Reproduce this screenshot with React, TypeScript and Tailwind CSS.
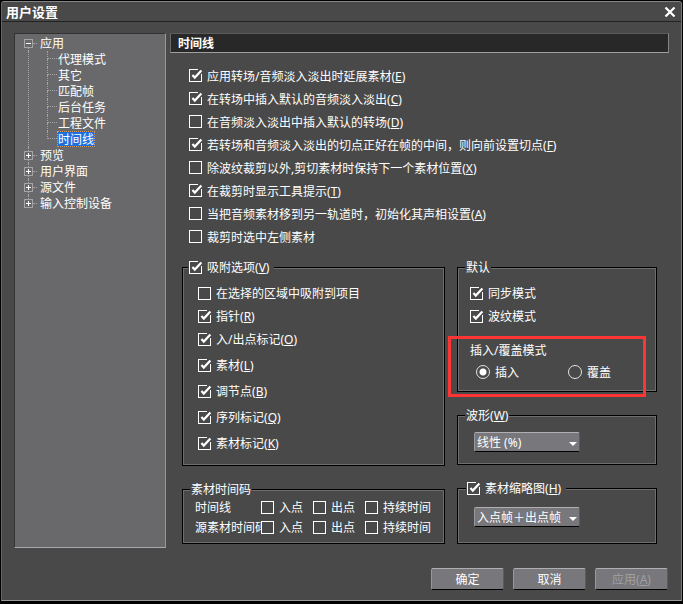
import React, { useState } from 'react';

interface CheckItem {
  label: string;
  hotkey?: string;
  checked?: boolean;
}

const generalOptions: CheckItem[] = [
  { label: '应用转场/音频淡入淡出时延展素材', hotkey: 'E', checked: true },
  { label: '在转场中插入默认的音频淡入淡出', hotkey: 'C', checked: true },
  { label: '在音频淡入淡出中插入默认的转场', hotkey: 'D' },
  { label: '若转场和音频淡入淡出的切点正好在帧的中间，则向前设置切点', hotkey: 'F', checked: true },
  { label: '除波纹裁剪以外,剪切素材时保持下一个素材位置', hotkey: 'X' },
  { label: '在裁剪时显示工具提示', hotkey: 'T', checked: true },
  { label: '当把音频素材移到另一轨道时，初始化其声相设置', hotkey: 'A' },
  { label: '裁剪时选中左侧素材' },
];

const snapTargets: CheckItem[] = [
  { label: '在选择的区域中吸附到项目' },
  { label: '指针', hotkey: 'R', checked: true },
  { label: '入/出点标记', hotkey: 'O', checked: true },
];

const snapMarkers: CheckItem[] = [
  { label: '素材', hotkey: 'L', checked: true },
  { label: '调节点', hotkey: 'B', checked: true },
  { label: '序列标记', hotkey: 'Q', checked: true },
  { label: '素材标记', hotkey: 'K', checked: true },
];

const appPages = ['代理模式', '其它', '匹配帧', '后台任务', '工程文件', '时间线'];
const otherSections = ['预览', '用户界面', '源文件', '输入控制设备'];

const Hotkey = ({ k }: { k: string }) => (
  <>
    (<u className="underline-offset-1">{k}</u>)
  </>
);

const Check: React.FC<CheckItem> = ({ label, hotkey, checked }) => (
  <label className="flex h-4 items-center gap-[5px] whitespace-nowrap">
    <span className="relative flex shrink-0">
      <input
        type="checkbox"
        defaultChecked={checked}
        className="peer size-[13px] appearance-none border border-white"
      />
      <svg
        viewBox="0 0 14 14"
        className="pointer-events-none absolute top-0 left-0 hidden size-[14px] peer-checked:block"
        fill="none"
      >
        <path d="M9 0H14V5L9 8Z" fill="#494949" />
        <path d="M12.5 5V8" stroke="#fff" />
        <path d="M3.4 6L5.8 8.6L12.4 1.6" stroke="#fff" strokeWidth="2.2" />
      </svg>
    </span>
    <span className="pt-[2px]">
      {label}
      {hotkey && <Hotkey k={hotkey} />}
    </span>
  </label>
);

const Group: React.FC<{ title: React.ReactNode; className?: string; children: React.ReactNode }> = ({
  title,
  className,
  children,
}) => (
  <fieldset
    className={`min-w-0 border border-black shadow-[inset_0_0_0_1px_#6e6e6e] ${className ?? ''}`}
  >
    {title}
    {children}
  </fieldset>
);

const Dropdown = ({ label, options }: { label: string; options: string[] }) => (
  <div className="relative ml-4 w-[106px]">
    <select
      aria-label={label}
      className="block h-5 w-full appearance-none rounded-[2px] border border-t-[#b0b0b3] border-r-[#5c5c60] border-b-black border-l-[#98989b] bg-[#77777c] pt-[2px] pl-[2px] leading-4 text-white"
    >
      {options.map((o) => (
        <option key={o}>{o}</option>
      ))}
    </select>
    <svg viewBox="0 0 8 4" className="pointer-events-none absolute top-[10px] right-[3px] h-1 w-2">
      <path d="M0 0H8L4 4Z" fill="#fff" />
    </svg>
  </div>
);

const Mode = ({ label, checked, onChange }: { label: string; checked: boolean; onChange: () => void }) => (
  <label className="flex h-4 items-center gap-[5px] whitespace-nowrap">
    <input
      type="radio"
      name="edit-mode"
      checked={checked}
      onChange={onChange}
      className="size-[14px] appearance-none rounded-full border border-[#e4e4e4] checked:bg-[radial-gradient(circle,#fff_3px,transparent_4px)]"
    />
    <span className="pt-[2px]">{label}</span>
  </label>
);

const Section = ({ label, open, first, last }: { label: string; open?: boolean; first?: boolean; last?: boolean }) => (
  <div className="flex h-4 items-center">
    <span className="flex h-4 w-[9px] flex-col items-center">
      <span className={`h-1 border-l border-dotted ${first ? 'border-transparent' : 'border-[#a5a5a8]'}`} />
      <button
        aria-label={label}
        className="flex size-[9px] shrink-0 items-center justify-center border border-[#a5a5a8]"
      >
        <svg viewBox="0 0 5 5" className="size-[5px]">
          <path d={open ? 'M0 2.5H5' : 'M0 2.5H5M2.5 0V5'} stroke="#fff" />
        </svg>
      </button>
      <span className={`h-[3px] border-l border-dotted ${last ? 'border-transparent' : 'border-[#a5a5a8]'}`} />
    </span>
    <span className="w-1 border-t border-dotted border-[#a5a5a8]" />
    <span className="ml-[3px] pt-[2px]">{label}</span>
  </div>
);

const Tree = () => {
  const [page, setPage] = useState('时间线');

  return (
    <nav className="w-[152px] shrink-0 border border-t-[#333] border-r-[#98989a] border-b-[#a8a8aa] border-l-[#333] bg-[#69696b] pt-px pl-[9px]">
      <Section label="应用" open first />
      <ul className="ml-1 border-l border-dotted border-[#a5a5a8] pl-[18px]">
        {appPages.map((p, i) => (
          <li key={p} className="flex h-4">
            <span className="flex w-[10px] flex-col">
              <span className="h-2 border-b border-l border-dotted border-[#a5a5a8]" />
              {i < appPages.length - 1 && (
                <span className="h-2 border-l border-dotted border-[#a5a5a8]" />
              )}
            </span>
            <button
              onClick={() => setPage(p)}
              className={`h-4 border border-dotted leading-4 ${
                page === p ? 'border-[#d79a5b] bg-[#1d6fe0]' : 'border-transparent'
              }`}
            >
              {p}
            </button>
          </li>
        ))}
      </ul>
      {otherSections.map((s, i) => (
        <Section key={s} label={s} last={i === otherSections.length - 1} />
      ))}
    </nav>
  );
};

const TimecodeRow = ({ label }: { label: string }) => (
  <div className="flex h-5 items-center pl-3">
    <span className="w-[66px] shrink-0 overflow-hidden pt-[2px] whitespace-nowrap">{label}</span>
    <div className="flex gap-[10px]">
      <Check label="入点" />
      <Check label="出点" />
      <Check label="持续时间" />
    </div>
  </div>
);

const legendClass = 'ml-[7px] h-4 bg-[#494949] px-px leading-[18px]';

const buttonClass =
  'h-[22px] w-[73px] rounded-[2px] border border-t-[#b0b0b3] border-r-[#5c5c60] border-b-black border-l-[#98989b] bg-[#77777c] pt-px';

export default function App() {
  const [mode, setMode] = useState('插入');

  return (
    <div className="min-h-screen bg-black px-px pt-px pb-[2px] font-['Noto_Sans','Noto_Sans_CJK_SC',sans-serif] text-[12px] leading-4 text-white">
      <div className="rounded-t-[3px] border border-t-[#858585] border-r-[#777] border-b-[#999] border-l-[#666] bg-[#494949]">
        {/* Title bar */}
        <header className="flex h-5 items-center justify-between border-b border-[#222] pr-[5px] pl-1">
          <h1 className="text-[13px] font-bold">用户设置</h1>
          <button aria-label="关闭">
            <svg viewBox="0 0 12 10" className="h-[10px] w-3" fill="none">
              <path d="M1.5 0.5L10.5 9.5M10.5 0.5L1.5 9.5" stroke="#fff" strokeWidth="2.2" />
            </svg>
          </button>
        </header>

        <div className="flex gap-1 px-3 pt-[11px]">
          <Tree />

          <main className="min-w-0 flex-1 pb-1">
            <h2 className="h-5 border border-t-[#5c5c5c] border-r-[#858585] border-b-[#a0a0a0] border-l-[#6a6a6a] bg-[#282828] pl-[7px] leading-5 font-bold">
              时间线
            </h2>

            <div className="px-3 pt-[11px]">
              <div className="pl-[7px]">
                {generalOptions.map((o) => (
                  <div key={o.label} className="flex h-[23px] items-center">
                    <Check {...o} />
                  </div>
                ))}
              </div>

              <div className="mt-[11px] grid grid-cols-[263fr_200fr] gap-3">
                {/* Left column */}
                <div className="flex flex-col gap-[15px]">
                  <Group
                    className="flex-1"
                    title={
                      <legend className="ml-[5px] bg-[#494949] pr-[5px] pl-px">
                        <Check label="吸附选项" hotkey="V" checked />
                      </legend>
                    }
                  >
                    <div className="flex flex-col gap-[7px] pt-[10px] pl-[15px]">
                      {snapTargets.map((o) => (
                        <Check key={o.label} {...o} />
                      ))}
                    </div>
                    <div className="flex flex-col gap-[10px] pt-[10px] pl-[15px]">
                      {snapMarkers.map((o) => (
                        <Check key={o.label} {...o} />
                      ))}
                    </div>
                  </Group>

                  <Group className="pb-[6px]" title={<legend className={legendClass}>素材时间码</legend>}>
                    <TimecodeRow label="时间线" />
                    <TimecodeRow label="源素材时间码" />
                  </Group>
                </div>

                {/* Right column */}
                <div className="flex flex-col gap-[15px]">
                  <Group className="pb-[11px]" title={<legend className={legendClass}>默认</legend>}>
                    <div className="flex flex-col gap-[7px] pt-[10px] pl-3">
                      <Check label="同步模式" checked />
                      <Check label="波纹模式" checked />
                    </div>
                    <div className="relative mt-[18px] pl-3">
                      <p className="h-4 leading-[18px]">插入/覆盖模式</p>
                      <div className="mt-[6px] flex gap-[49px] pl-[6px]">
                        {['插入', '覆盖'].map((m) => (
                          <Mode key={m} label={m} checked={mode === m} onChange={() => setMode(m)} />
                        ))}
                      </div>
                      <div className="pointer-events-none absolute -top-[6px] right-[10px] -bottom-[17px] -left-[10px] border-3 border-[#ff3535]" />
                    </div>
                  </Group>

                  <Group
                    className="pb-3"
                    title={
                      <legend className={legendClass}>
                        波形
                        <Hotkey k="W" />
                      </legend>
                    }
                  >
                    <div className="pt-[9px]">
                      <Dropdown label="波形" options={['线性 (%)', '对数 (dB)']} />
                    </div>
                  </Group>

                  <Group
                    className="pb-4"
                    title={
                      <legend className="ml-2 bg-[#494949] pr-[5px] pl-px">
                        <Check label="素材缩略图" hotkey="H" checked />
                      </legend>
                    }
                  >
                    <div className="pt-[11px]">
                      <Dropdown label="素材缩略图" options={['入点帧＋出点帧', '入点帧', '出点帧']} />
                    </div>
                  </Group>
                </div>
              </div>
            </div>
          </main>
        </div>

        <footer className="flex justify-end gap-[9px] pt-5 pr-[13px] pb-[10px]">
          <button className={buttonClass}>确定</button>
          <button className={buttonClass}>取消</button>
          <button className={`${buttonClass} text-[#a0a0a3]`} disabled>
            应用
            <Hotkey k="A" />
          </button>
        </footer>
      </div>
    </div>
  );
}
